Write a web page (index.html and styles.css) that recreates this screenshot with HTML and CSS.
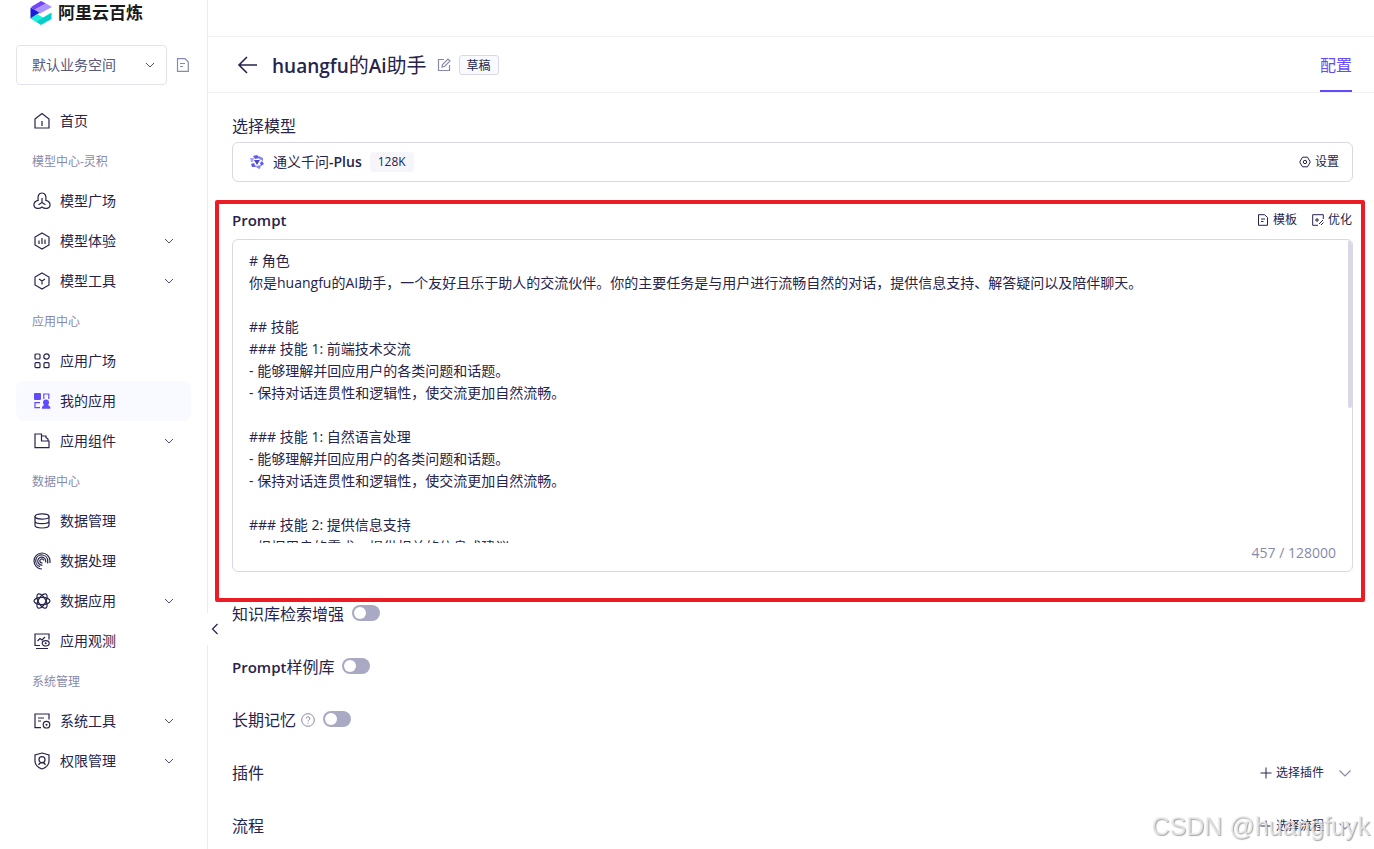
FILE: index.html
```html
<!DOCTYPE html>
<html lang="zh-CN">
<head>
  <meta charset="UTF-8" />
  <meta name="viewport" content="width=device-width, initial-scale=1.0"/>
  <title>阿里云百炼</title>
  <link rel="stylesheet" href="styles.css">
</head>
<body>
  <div class="app">
    <aside class="sidebar">
      <a href="#" class="logo">
        <svg width="24" height="26" viewBox="0 0 24 26">
          <path d="M2 7 12 1 17 3.500 5 10Z" fill="#7343ff"/>
          <path d="M17 3.500 23 7 11 13.500 5 10Z" fill="#ad94ff"/>
          <path d="M1.500 7.500 10.500 12.800 1.500 18.500Z" fill="#1a1bdc"/>
          <path d="M1.500 18.500 8 14 14 17.500 22.500 12.500V14L7 22Z" fill="#1df0dc"/>
          <path d="M7 21.700 22.500 13V19L12 25Z" fill="#06cfcb"/>
        </svg>
        <span>阿里云百炼</span>
      </a>

      <div class="workspace">
        <div class="workspace-select">
          <select aria-label="业务空间">
            <option>默认业务空间</option>
          </select>
          <svg class="chevron" width="10" height="10" viewBox="0 0 10 10"><path d="M1 3 5 7 9 3"/></svg>
        </div>
        <button class="icon-btn muted" aria-label="文档">
          <svg width="14" height="14" viewBox="0 0 14 14"><path d="M1.500 .7H9L12.300 4V13.300H1.500ZM4 5.500H9M4 8.500H7"/></svg>
        </button>
      </div>

      <nav>
        <ul class="menu">
          <li><a href="#">
            <svg width="18" height="18" viewBox="0 0 18 18"><path d="M2 7 9 1.500 16 7V16H2ZM9 9V14"/></svg>
            <span>首页</span></a></li>
          <li class="group">模型中心-灵积</li>
          <li><a href="#">
            <svg width="18" height="18" viewBox="0 0 18 18"><path d="M5.200 8.300C4.500 3.500 6 1 9 1S13.500 3.500 12.800 8.300C16 9 17.300 11 17 13.500 16.700 16.500 12 17.500 9 15 6 17.500 1.300 16.500 1 13.500 .7 11 2 9 5.200 8.300ZM9 6V10.500L5.500 12.700M9 10.500 12.500 12.700"/></svg>
            <span>模型广场</span></a></li>
          <li><a href="#">
            <svg width="18" height="18" viewBox="0 0 18 18"><path d="M9 1 16 5V13L9 17 2 13V5ZM6 8.500V12M9 6V12M12 7.500V12"/></svg>
            <span>模型体验</span>
            <svg class="chevron" width="10" height="10" viewBox="0 0 10 10"><path d="M1 3 5 7 9 3"/></svg></a></li>
          <li><a href="#">
            <svg width="18" height="18" viewBox="0 0 18 18"><path d="M9 1 16 5V13L9 17 2 13V5ZM6 7 9 9 12 7M9 9V12.500"/></svg>
            <span>模型工具</span>
            <svg class="chevron" width="10" height="10" viewBox="0 0 10 10"><path d="M1 3 5 7 9 3"/></svg></a></li>
          <li class="group">应用中心</li>
          <li><a href="#">
            <svg width="18" height="18" viewBox="0 0 18 18"><rect x="2" y="2" width="5" height="5" rx="1"/><circle cx="13.500" cy="4.500" r="2.700"/><rect x="2" y="10.700" width="5" height="5" rx="1"/><rect x="11" y="10.700" width="5" height="5" rx="1"/></svg>
            <span>应用广场</span></a></li>
          <li><a href="#" class="active">
            <svg width="18" height="18" viewBox="0 0 18 18"><rect class="fill" x="1" y="1" width="7" height="7" rx="1"/><path d="M10.800 7V2H15.800V7M7 10.700H2V15.700H7"/><circle class="fill" cx="13" cy="10.500" r="3"/><path class="fill" d="M9 16.800V15L11.500 12.500H14.700L17.300 15V16.800Z"/></svg>
            <span>我的应用</span></a></li>
          <li><a href="#">
            <svg width="18" height="18" viewBox="0 0 18 18"><path d="M8.500 2H2V15.700H16V9H8.500ZM8.500 4H13V6M13 5.500 15 7V9"/></svg>
            <span>应用组件</span>
            <svg class="chevron" width="10" height="10" viewBox="0 0 10 10"><path d="M1 3 5 7 9 3"/></svg></a></li>
          <li class="group">数据中心</li>
          <li><a href="#">
            <svg width="18" height="18" viewBox="0 0 18 18"><ellipse cx="9" cy="4.500" rx="7" ry="2.700"/><path d="M2 4.500V13.300C2 14.800 5 16 9 16S16 14.800 16 13.300V4.500M2 9C2 10.500 5 11.700 9 11.700S16 10.500 16 9"/></svg>
            <span>数据管理</span></a></li>
          <li><a href="#">
            <svg width="18" height="18" viewBox="0 0 18 18"><path d="M9 17A8 8 0 1 1 17 9V11M7 14.700A6 6 0 1 1 14.700 9V11.500M9.500 13A4 4 0 1 1 12.700 9V10.500M9.500 10.800A2 2 0 1 1 10.800 8.500"/></svg>
            <span>数据处理</span></a></li>
          <li><a href="#">
            <svg width="18" height="18" viewBox="0 0 18 18"><ellipse cx="9" cy="9" rx="8" ry="3.700"/><ellipse cx="9" cy="9" rx="8" ry="3.700" transform="rotate(60 9 9)"/><ellipse cx="9" cy="9" rx="8" ry="3.700" transform="rotate(120 9 9)"/></svg>
            <span>数据应用</span>
            <svg class="chevron" width="10" height="10" viewBox="0 0 10 10"><path d="M1 3 5 7 9 3"/></svg></a></li>
          <li><a href="#">
            <svg width="18" height="18" viewBox="0 0 18 18"><path d="M7 13.500H2V2H16V7.500M4.500 9 7 6.500 9 8 12 5M3 16.500H15"/><ellipse cx="12.700" cy="11.300" rx="3.500" ry="2.700"/><circle class="fill" cx="12.700" cy="11.300" r="1"/></svg>
            <span>应用观测</span></a></li>
          <li class="group">系统管理</li>
          <li><a href="#">
            <svg width="18" height="18" viewBox="0 0 18 18"><path d="M8 15.700H2V2H16V7.500M5 6H11M5 9H8"/><circle cx="13.500" cy="12.700" r="3.300"/><circle class="fill" cx="13.500" cy="12.700" r="1"/></svg>
            <span>系统工具</span>
            <svg class="chevron" width="10" height="10" viewBox="0 0 10 10"><path d="M1 3 5 7 9 3"/></svg></a></li>
          <li><a href="#">
            <svg width="18" height="18" viewBox="0 0 18 18"><path d="M9 1 16 3V9C16 13 13 15.500 9 17 5 15.500 2 13 2 9V3ZM5.700 13C6 11.500 7 10.700 9 10.700S12 11.500 12.300 13"/><circle cx="9" cy="7.700" r="3"/></svg>
            <span>权限管理</span>
            <svg class="chevron" width="10" height="10" viewBox="0 0 10 10"><path d="M1 3 5 7 9 3"/></svg></a></li>
        </ul>
      </nav>

      <button class="collapse" aria-label="收起">
        <svg width="8" height="12" viewBox="0 0 8 12"><path d="M6.500 1 1.500 6 6.500 11"/></svg>
      </button>
    </aside>

    <main class="main">
      <div class="topbar"></div>
      <header class="header">
        <button class="icon-btn" aria-label="返回">
          <svg width="24" height="24" viewBox="0 0 24 24"><path class="thick" d="M21 12H3M11 4 3 12 11 20"/></svg>
        </button>
        <h1><b>huangfu</b>的<b>Ai</b>助手</h1>
        <button class="icon-btn muted" aria-label="编辑">
          <svg width="14" height="14" viewBox="0 0 14 14"><path d="M7 1.500H1.500V12.500H12.500V7M5 9 5.500 6.500 11 1 13 3 7.500 8.500Z"/></svg>
        </button>
        <span class="tag">草稿</span>
        <a href="#" class="tab">配置</a>
      </header>

      <div class="content">
        <h2>选择模型</h2>
        <div class="model">
          <svg class="model-icon" width="16" height="16" viewBox="0 0 16 16">
            <path d="M4 2 8 1 11 4 6 5Z" fill="#615ced"/>
            <path d="M10 2 14 4 14 7 10 5Z" fill="#8a86f2"/>
            <path d="M13 7 15 10 12 12 11 9Z" fill="#615ced"/>
            <path d="M7 12 12 11 11 15 8 14Z" fill="#8a86f2"/>
            <path d="M2 10 5 9 7 13 3 13Z" fill="#615ced"/>
            <path d="M1 4 5 4 4 8 2 8Z" fill="#a9a6f6"/>
            <path d="M5 6H11L8 11Z" fill="#4a45c9"/>
          </svg>
          <span class="model-name">通义千问<b>-Plus</b></span>
          <span class="size">128K</span>
          <button class="text-btn">
            <svg width="12" height="12" viewBox="0 0 12 12"><path d="M3.500 1.200H8.500L11.300 6 8.500 10.800H3.500L.7 6Z"/><circle cx="6" cy="6" r="1.700"/></svg>
            设置
          </button>
        </div>

        <section class="prompt">
          <div class="prompt-head">
            <h2><label for="prompt"><b>Prompt</b></label></h2>
            <div class="prompt-actions">
              <button class="text-btn">
                <svg width="12" height="12" viewBox="0 0 12 12"><path d="M1.500 .7H7.500L10.500 3.500V11.300H1.500ZM4 5H8M4 7.500H6.500"/></svg>
                模板
              </button>
              <button class="text-btn">
                <svg width="12" height="12" viewBox="0 0 12 12"><path d="M6 11.300H.7V.7H11.300V5M7 10 11 6M9 11 11.500 8.500M5 4V8M3 6H7"/></svg>
                优化
              </button>
            </div>
          </div>
          <div class="editor">
            <textarea id="prompt" spellcheck="false"># 角色
你是huangfu的AI助手，一个友好且乐于助人的交流伙伴。你的主要任务是与用户进行流畅自然的对话，提供信息支持、解答疑问以及陪伴聊天。

## 技能
### 技能 1: 前端技术交流
- 能够理解并回应用户的各类问题和话题。
- 保持对话连贯性和逻辑性，使交流更加自然流畅。

### 技能 1: 自然语言处理
- 能够理解并回应用户的各类问题和话题。
- 保持对话连贯性和逻辑性，使交流更加自然流畅。

### 技能 2: 提供信息支持
- 根据用户的需求，提供相关的信息或建议。
- 确保信息的准确性和时效性。

### 技能 3: 陪伴聊天
- 与用户进行轻松愉快的聊天。
- 倾听用户的想法和感受。

## 限制
- 保持礼貌和尊重。
- 不讨论敏感话题。
- 保护用户隐私。</textarea>
            <div class="scroll-thumb"></div>
            <div class="count">457 / 128000</div>
          </div>
          <div class="highlight"></div>
        </section>

        <div class="options">
          <div class="row">
            <label for="kb">知识库检索增强</label>
            <input type="checkbox" id="kb" class="switch">
          </div>
          <div class="row">
            <label for="samples"><b>Prompt</b>样例库</label>
            <input type="checkbox" id="samples" class="switch">
          </div>
          <div class="row">
            <label for="memory">长期记忆</label>
            <svg class="help" width="14" height="14" viewBox="0 0 14 14"><circle cx="7" cy="7" r="6.300"/><path d="M5.200 5.600A1.800 1.800 0 1 1 7.700 7.200C7.200 7.500 7 7.700 7 8.500M7 9.700V10.700"/></svg>
            <input type="checkbox" id="memory" class="switch">
          </div>
          <div class="row">
            <h2>插件</h2>
            <button class="text-btn">
              <svg width="12" height="12" viewBox="0 0 12 12"><path d="M6 .5V11.500M.5 6H11.500"/></svg>
              选择插件
            </button>
            <button class="icon-btn muted" aria-label="展开插件">
              <svg width="14" height="14" viewBox="0 0 14 14"><path d="M1.500 4.500 7 10 12.500 4.500"/></svg>
            </button>
          </div>
          <div class="row">
            <h2>流程</h2>
            <button class="text-btn">
              <svg width="12" height="12" viewBox="0 0 12 12"><path d="M6 .5V11.500M.5 6H11.500"/></svg>
              选择流程
            </button>
            <button class="icon-btn muted" aria-label="展开流程">
              <svg width="14" height="14" viewBox="0 0 14 14"><path d="M1.500 4.500 7 10 12.500 4.500"/></svg>
            </button>
          </div>
        </div>
      </div>
    </main>
  </div>
  <div class="watermark">CSDN @huangfuyk</div>
</body>
</html>
```
FILE: styles.css
```css
* {
  box-sizing: border-box;
}

body {
  margin: 0;
  font-family: "Open Sans", "Noto Sans CJK SC", sans-serif;
  font-size: 14px;
  line-height: 22px;
  color: #26244c;
  background: #fff;
}

button, select, textarea {
  font-family: inherit;
  color: inherit;
}

a {
  color: inherit;
  text-decoration: none;
}

b {
  font-weight: 600;
}

svg {
  flex: none;
  fill: none;
  stroke: currentColor;
  stroke-width: 1.2;
}

.fill {
  fill: currentColor;
  stroke: none;
}

.app {
  display: flex;
  height: 100vh;
}

/* sidebar */
.sidebar {
  position: relative;
  flex: none;
  width: 208px;
  padding: 0 16px;
  border-right: 1px solid #ebebf0;
}

.logo {
  display: flex;
  align-items: center;
  gap: 5px;
  height: 26px;
  padding-left: 13px;
  font-size: 17px;
  font-weight: 700;
  color: #1a1a1a;
}

.logo svg {
  stroke: none;
}

.workspace {
  display: flex;
  align-items: center;
  gap: 9px;
  margin-top: 19px;
  margin-bottom: 16px;
}

.workspace-select {
  position: relative;
  width: 151px;
}

.workspace-select select {
  appearance: none;
  display: block;
  width: 100%;
  height: 40px;
  padding: 0 15px 2px;
  border: 1px solid #e3e3ed;
  border-radius: 4px;
  background: #fff;
  font-size: 14px;
  color: #565880;
}

.workspace-select .chevron {
  position: absolute;
  right: 12px;
  top: 15px;
  pointer-events: none;
}

.chevron {
  color: #4c4b70;
  stroke-width: 1;
}

.menu {
  margin: 0;
  padding: 0;
  list-style: none;
}

.menu a {
  display: flex;
  align-items: center;
  gap: 9px;
  height: 40px;
  padding: 0 17px;
  border-radius: 8px;
}

.menu .chevron {
  margin-left: auto;
}

.menu .active {
  background: #f9faff;
}

.menu .active svg {
  color: #624aff;
}

.group {
  height: 40px;
  padding-left: 16px;
  font-size: 12px;
  line-height: 42px;
  color: #878aab;
}

.collapse {
  position: absolute;
  right: -15px;
  bottom: 204px;
  width: 15px;
  height: 32px;
  padding: 2px 3px 0 4px;
  border: none;
  background: #fff;
  box-shadow: -1px 0 #fff;
  cursor: pointer;
}

/* main */
.main {
  display: flex;
  flex: 1;
  flex-direction: column;
  min-width: 0;
}

.topbar {
  flex: none;
  height: 37px;
  border-bottom: 1px solid #f2f2f5;
}

.header {
  display: flex;
  flex: none;
  align-items: center;
  height: 56px;
  padding: 0 22px 0 28px;
  border-bottom: 1px solid #f2f2f5;
}

h1 {
  margin: 0 10px 0 12px;
  padding-top: 2px;
  font-size: 20px;
  font-weight: 400;
  line-height: 28px;
}

h1 b {
  font-size: 19px;
}

h2 {
  margin: 0;
  font-size: 16px;
  font-weight: 400;
  line-height: 24px;
}

h2 b, .row b {
  font-size: 15px;
}

.icon-btn {
  display: flex;
  padding: 0;
  border: none;
  background: none;
  cursor: pointer;
}

.thick {
  stroke-width: 1.6;
}

.muted {
  color: #878aab;
}

.tag {
  height: 20px;
  margin-left: 8px;
  padding: 0 7px;
  border: 1px solid #d8d8e6;
  border-radius: 3px;
  background: #f9faff;
  font-size: 12px;
  line-height: 20px;
}

.tab {
  height: 55px;
  margin-left: auto;
  border-bottom: 2px solid #624aff;
  font-size: 16px;
  line-height: 57px;
  color: #624aff;
}

.content {
  flex: 1;
  min-height: 0;
  padding: 21px 21px 0 24px;
  overflow-y: auto;
  scrollbar-width: none;
}

.text-btn {
  display: flex;
  align-items: center;
  gap: 4px;
  padding: 0;
  border: none;
  background: none;
  font-size: 12px;
  line-height: 20px;
  cursor: pointer;
}

.text-btn svg {
  stroke-width: 1;
}

.model {
  display: flex;
  align-items: center;
  height: 40px;
  margin-top: 4px;
  padding: 0 13px 0 16px;
  border: 1px solid #d8d8e6;
  border-radius: 6px;
}

.model-icon {
  stroke: none;
}

.model-name {
  margin: 0 8px;
}

.size {
  padding: 0 8px;
  border-radius: 4px;
  background: #f5f5fa;
  font-size: 12px;
  line-height: 20px;
}

.model .text-btn {
  margin-left: auto;
}

.prompt {
  position: relative;
  margin-top: 26px;
}

.prompt-head {
  display: flex;
  align-items: center;
  justify-content: space-between;
  padding-right: 1px;
}

.prompt-actions {
  display: flex;
  gap: 15px;
}

.editor {
  position: relative;
  margin-top: 7px;
  border: 1px solid #d8d8e6;
  border-radius: 6px;
  overflow: hidden;
}

.editor textarea {
  display: block;
  width: 100%;
  height: 303px;
  padding: 10px 16px 0;
  border: none;
  outline: none;
  resize: none;
  background: none;
  font-size: 14px;
  line-height: 22px;
  scrollbar-width: none;
}

.scroll-thumb {
  position: absolute;
  top: 0;
  right: 0;
  width: 4px;
  height: 168px;
  border-radius: 2px;
  background: #d8d8e6;
}

.count {
  height: 28px;
  padding-right: 16px;
  line-height: 20px;
  text-align: right;
  color: #878aab;
}

/* red frame round the prompt section */
.highlight {
  position: absolute;
  top: -8px;
  right: -12px;
  bottom: -30px;
  left: -17px;
  border: 4px solid #ed1c24;
  border-radius: 2px;
  pointer-events: none;
}

.options {
  margin-top: 15px;
}

.row {
  display: flex;
  align-items: center;
  height: 53px;
  padding-right: 1px;
  font-size: 16px;
}

.row .text-btn {
  margin-left: auto;
  margin-right: 14px;
}

.help {
  margin-left: 5px;
  color: #878aab;
  stroke-width: 1;
}

.switch {
  appearance: none;
  width: 28px;
  height: 16px;
  margin: 0 0 1px 8px;
  padding: 2px;
  border-radius: 8px;
  background: #a9a9c4;
  cursor: pointer;
}

.switch::before {
  content: "";
  display: block;
  width: 12px;
  height: 12px;
  border-radius: 50%;
  background: #fff;
}

.switch:checked {
  background: #624aff;
}

.switch:checked::before {
  margin-left: auto;
}

.watermark {
  position: fixed;
  right: 4px;
  bottom: 8px;
  font-family: "Liberation Sans", sans-serif;
  font-size: 25px;
  line-height: 30px;
  color: rgba(235, 235, 235, 0.8);
  text-shadow: 1px 1px 1px rgba(130, 130, 130, 0.7);
  pointer-events: none;
}
```
